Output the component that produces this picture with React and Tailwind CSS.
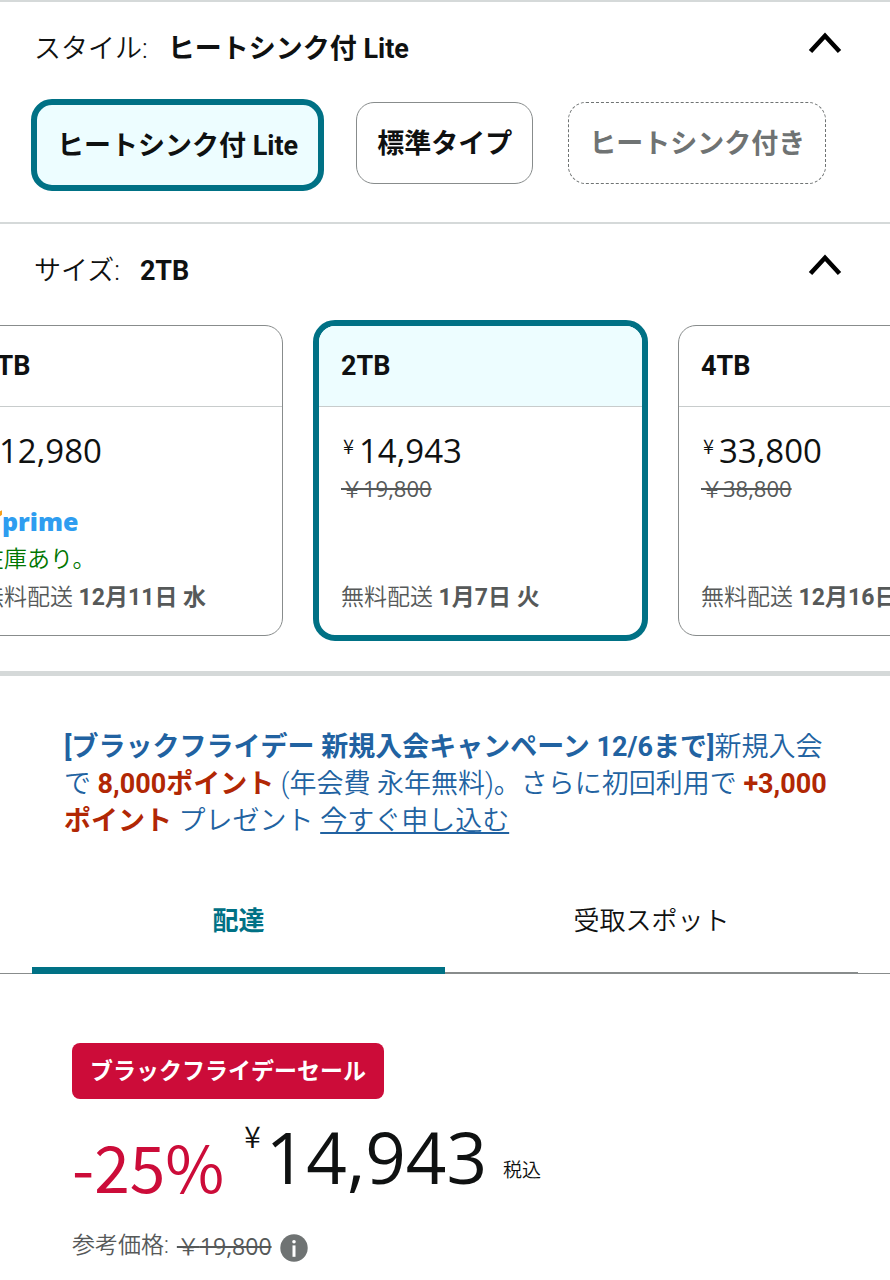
import React, { useState } from 'react';
import clsx from 'clsx';

const styles = [
  { id: 'lite', label: 'ヒートシンク付 Lite' },
  { id: 'standard', label: '標準タイプ' },
  { id: 'heatsink', label: 'ヒートシンク付き', unavailable: true },
];

const sizes = [
  { id: '1TB', price: '12,980', prime: true, stock: '在庫あり。', date: '12月11日 水' },
  { id: '2TB', price: '14,943', listPrice: '19,800', date: '1月7日 火' },
  { id: '4TB', price: '33,800', listPrice: '38,800', date: '12月16日 月' },
];

const Chevron = ({ open }) => (
  <svg
    viewBox="0 0 34 24"
    className={clsx('h-6 w-[34px]', !open && 'rotate-180')}
    fill="none"
    stroke="#000"
    strokeWidth="4.6"
  >
    <path d="M2.5 20.5 L17 4.8 L31.5 20.5" />
  </svg>
);

const SectionHeader = ({ label, value, open, onToggle }) => (
  <div className="flex items-center justify-between pl-[34px] pr-12">
    <h2 className="text-[27px] leading-[38px]">
      <span className="font-[350]">{label}:</span>
      <span className="ml-5 font-bold">{value}</span>
    </h2>
    <button type="button" aria-label={label} aria-expanded={open} onClick={onToggle} className="pb-3">
      <Chevron open={open} />
    </button>
  </div>
);

const PrimeBadge = () => (
  <div className="flex h-10 items-center">
    <svg viewBox="0 0 21 24" className="h-6 w-[21px]" fill="none" stroke="#f9a01b" strokeWidth="4">
      <path d="M2 11 L8 19 Q12 8 22 3" />
    </svg>
    <span className="font-['Open_Sans',sans-serif] text-[25px] font-extrabold leading-[38px] text-[#2e9df0]">prime</span>
  </div>
);

const SizeCard = ({ item, selected, onSelect }) => (
  <button
    type="button"
    aria-pressed={selected}
    onClick={onSelect}
    className={clsx(
      'flex shrink-0 flex-col text-left',
      selected
        ? '-m-[5px] min-h-[321px] w-[335px] rounded-[22px] border-[6px] border-[#007185]'
        : 'min-h-[311px] w-[325px] rounded-[18px] border border-[#888c8c]'
    )}
  >
    <div
      className={clsx(
        'w-full rounded-t-[16px] border-b border-[#c8cccc] px-[22px] py-[21px] text-[27px] font-bold leading-[38px]',
        selected && 'bg-[#edfdff]'
      )}
    >
      {item.id}
    </div>
    <div className="flex w-full grow flex-col px-[22px] pb-[18px] pt-[25px] text-[23px] leading-[38px]">
      <div className="flex items-start font-['Open_Sans','Noto_Sans_CJK_JP',sans-serif]">
        <span className="pl-[2px] pr-[5px] font-['Noto_Sans_CJK_JP',sans-serif] text-xl font-[350] leading-7">¥</span>
        <span className="text-[33px]">{item.price}</span>
      </div>
      {item.listPrice && (
        <s className="font-['Open_Sans','Noto_Sans_CJK_JP',sans-serif] text-[22px] leading-9 text-[#565959]">
          <span className="font-[350]">￥</span>
          {item.listPrice}
        </s>
      )}
      <div className="mt-auto">
        {item.prime && <PrimeBadge />}
        {item.stock && <p className="font-[350] text-[#007600]">{item.stock}</p>}
        <p className="whitespace-nowrap text-[#565959]">
          <span className="font-[350]">無料配送 </span>
          <b>{item.date}</b>
        </p>
      </div>
    </div>
  </button>
);

const App = () => {
  const [style, setStyle] = useState('lite');
  const [size, setSize] = useState('2TB');
  const [styleOpen, setStyleOpen] = useState(true);
  const [sizeOpen, setSizeOpen] = useState(true);
  const [tab, setTab] = useState('delivery');

  const tabClass = (active) =>
    clsx(
      'flex h-[94px] flex-1 justify-center pt-[22px] text-[26px] leading-[38px]',
      active ? 'border-b-[7px] border-[#007185] font-bold text-[#007185]' : 'border-b-2 border-[#888c8c] font-[350]'
    );

  return (
    <div className="min-h-screen overflow-hidden bg-white font-['Roboto','Noto_Sans_CJK_JP',sans-serif] text-[#0f1111]">
      <section className="border-t-2 border-[#d5d9d9] pb-[34px] pt-7">
        <SectionHeader
          label="スタイル"
          value={styles.find((s) => s.id === style).label}
          open={styleOpen}
          onToggle={() => setStyleOpen(!styleOpen)}
        />
        {styleOpen && (
          <div className="flex items-start gap-[35px] px-[34px] pt-[34px]">
            {styles.map((s) => (
              <button
                key={s.id}
                type="button"
                aria-pressed={style === s.id}
                onClick={() => setStyle(s.id)}
                className={clsx(
                  'whitespace-nowrap px-5 pb-[19px] pt-[21px] text-[27px] font-bold leading-10',
                  style === s.id ? '-m-[3px] rounded-[21px] border-[6px] border-[#007185] bg-[#edfdff]' : 'rounded-[18px] border',
                  style !== s.id && (s.unavailable ? 'border-dashed border-[#6f7373] text-[#6f7373]' : 'border-[#888c8c]')
                )}
              >
                {s.label}
              </button>
            ))}
          </div>
        )}
      </section>

      <section className="border-b-[5px] border-t-2 border-[#d5d9d9] pb-[35px] pt-7">
        <SectionHeader label="サイズ" value={size} open={sizeOpen} onToggle={() => setSizeOpen(!sizeOpen)} />
        {sizeOpen && (
          <div className="-ml-[42px] flex gap-[35px] pt-[35px]">
            {sizes.map((item) => (
              <SizeCard key={item.id} item={item} selected={size === item.id} onSelect={() => setSize(item.id)} />
            ))}
          </div>
        )}
      </section>

      <p className="pl-16 pr-12 pt-[53px] text-[27px] font-[350] leading-[37px] text-[#2162a1]">
        <b className="font-bold">[ブラックフライデー 新規入会キャンペーン 12/6まで]</b>新規入会で{' '}
        <b className="font-bold text-[#b12704]">8,000ポイント</b> (年会費 永年無料)。さらに初回利用で{' '}
        <b className="font-bold text-[#b12704]">+3,000ポイント</b> プレゼント{' '}
        <a href="#apply" className="underline">今すぐ申し込む</a>
      </p>

      <div role="tablist" className="mt-10 flex items-end">
        <div className="w-8 border-b border-[#888c8c]" />
        <button type="button" role="tab" aria-selected={tab === 'delivery'} onClick={() => setTab('delivery')} className={tabClass(tab === 'delivery')}>
          配達
        </button>
        <button type="button" role="tab" aria-selected={tab === 'pickup'} onClick={() => setTab('pickup')} className={tabClass(tab === 'pickup')}>
          受取スポット
        </button>
        <div className="w-8 border-b border-[#888c8c]" />
      </div>

      <section className="px-[72px] pt-[69px]">
        <span className="inline-block rounded-lg bg-[#cc0c39] px-[18px] pb-[7px] pt-[9px] text-[23px] font-bold leading-10 text-white">
          ブラックフライデーセール
        </span>
        <div className="mt-4 flex items-center">
          <span className="pb-1 font-['Noto_Sans_CJK_JP',sans-serif] text-[64px] font-normal leading-[96px] text-[#cc0c39]">-25%</span>
          <span className="ml-5 flex items-start pb-5 font-['Open_Sans',sans-serif] text-[71px] leading-[84px]">
            <span className="pr-[5px] font-['Noto_Sans_CJK_JP',sans-serif] text-[30px] font-[350] leading-10">¥</span>
            14,943
          </span>
          <span className="ml-4 pt-2 text-[19px] font-[350]">税込</span>
        </div>
        <div className="mt-2 flex items-center text-[23px] font-[350] leading-[38px] text-[#565959]">
          <span>参考価格:</span>
          <s className="ml-2 font-['Open_Sans','Noto_Sans_CJK_JP',sans-serif] font-normal">
            <span className="font-[350]">￥</span>19,800
          </s>
          <button type="button" aria-label="参考価格について" className="ml-2 mt-1">
            <svg viewBox="0 0 28 28" className="size-7">
              <circle cx="14" cy="14" r="13.7" fill="#6f7373" />
              <circle cx="14" cy="7.8" r="1.8" fill="#fff" />
              <rect x="12.5" y="11.4" width="3" height="11.4" fill="#fff" />
            </svg>
          </button>
        </div>
      </section>
    </div>
  );
};

export default App;
